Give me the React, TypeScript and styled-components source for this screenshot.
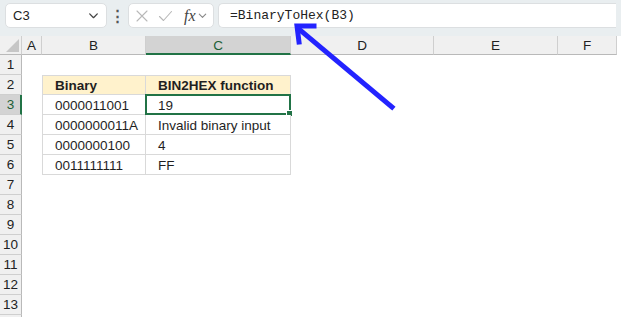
import React from "react";
import styled, { createGlobalStyle } from "styled-components";

const GlobalStyle = createGlobalStyle`
  html, body {
    margin: 0;
    padding: 0;
    background: #ffffff;
    overflow: hidden;
  }
  body {
    font-family: "Liberation Sans", Arial, sans-serif;
    color: #222;
  }
`;

const GREEN = "#217346";

const COLUMNS = [
    { name: "A", width: 20 },
    { name: "B", width: 104 },
    { name: "C", width: 145 },
    { name: "D", width: 143 },
    { name: "E", width: 124 },
    { name: "F", width: 59 },
];

// table in B2:C6
const TABLE: Record<number, [string, string]> = {
    2: ["Binary", "BIN2HEX function"],
    3: ["0000011001", "19"],
    4: ["0000000011A", "Invalid binary input"],
    5: ["0000000100", "4"],
    6: ["0011111111", "FF"],
};

const SELECTED_COL = "C";
const SELECTED_ROW = 3;
const ROW_COUNT = 13;

const ChevronDown = ({ size = 12, color = "#444" }: { size?: number; color?: string }) => (
    <svg width={size} height={size} viewBox="0 0 12 12" fill="none">
        <path d="M2.5 4.5 L6 8 L9.5 4.5" stroke={color} strokeWidth="1.2" strokeLinecap="round" strokeLinejoin="round" />
    </svg>
);

const CancelIcon = () => (
    <svg width="14" height="14" viewBox="0 0 14 14" fill="none">
        <path d="M2 2 L12 12 M12 2 L2 12" stroke="#b8b8b8" strokeWidth="1.1" strokeLinecap="round" />
    </svg>
);

const CheckIcon = () => (
    <svg width="15" height="14" viewBox="0 0 15 14" fill="none">
        <path d="M1.5 7.5 L5.5 11.5 L13.5 2.5" stroke="#b8b8b8" strokeWidth="1.1" strokeLinecap="round" strokeLinejoin="round" />
    </svg>
);

const CornerTriangle = () => (
    <svg width="13" height="13" viewBox="0 0 13 13">
        <polygon points="13,0 13,13 0,13" fill="#c6c6c6" />
    </svg>
);

const Arrow = () => (
    <ArrowLayer width="621" height="317" viewBox="0 0 621 317">
        <g stroke="#2323ff" strokeWidth="5" fill="none" strokeLinecap="square">
            <line x1="392" y1="107" x2="300" y2="30" />
            <polyline points="314,26 297,26 299,42" strokeLinejoin="miter" />
        </g>
    </ArrowLayer>
);

export default function App() {
    const rows = Array.from({ length: ROW_COUNT }, (_, i) => i + 1);

    return (
        <Page>
            <GlobalStyle />
            <Toolbar>
                <NameBox>
                    <span>C3</span>
                    <ChevronDown size={13} />
                </NameBox>
                <Dots>⋮</Dots>
                <FxBox>
                    <CancelIcon />
                    <CheckIcon />
                    <FxLabel>
                        fx
                        <ChevronDown size={11} color="#888" />
                    </FxLabel>
                </FxBox>
                <FormulaBox>=BinaryToHex(B3)</FormulaBox>
            </Toolbar>

            <Sheet>
                <Corner>
                    <CornerTriangle />
                </Corner>
                {COLUMNS.map((c) => (
                    <ColHeader key={c.name} selected={c.name === SELECTED_COL}>
                        {c.name}
                    </ColHeader>
                ))}
                <Filler />

                {rows.map((r) => {
                    const data = TABLE[r];
                    return (
                        <React.Fragment key={r}>
                            <RowHeader selected={r === SELECTED_ROW}>{r}</RowHeader>
                            <Cell />
                            {data ? (
                                <>
                                    <TableCell head={r === 2} first top={r === 2}>
                                        {data[0]}
                                    </TableCell>
                                    <TableCell head={r === 2} top={r === 2}>
                                        {data[1]}
                                        {r === SELECTED_ROW && <Selection />}
                                    </TableCell>
                                </>
                            ) : (
                                <>
                                    <Cell />
                                    <Cell />
                                </>
                            )}
                            <Cell />
                            <Cell />
                            <Cell />
                            <Filler />
                        </React.Fragment>
                    );
                })}
                {/* the next row just peeks in at the bottom edge */}
                <RowHeader />
            </Sheet>
            <Arrow />
        </Page>
    );
}

const Page = styled.div`
    position: relative;
    width: 621px;
    height: 317px;
    overflow: hidden;
    background: #ffffff;
`;

const Toolbar = styled.div`
    height: 36px;
    box-sizing: border-box;
    padding: 3px 5px 0 5px;
    display: flex;
    align-items: flex-start;
    background: #e9eef0;
`;

const BoxBase = styled.div`
    height: 25px;
    box-sizing: border-box;
    background: #ffffff;
    border: 1px solid #dcdfe1;
    border-radius: 5px;
    display: flex;
    align-items: center;
`;

const NameBox = styled(BoxBase)`
    width: 102px;
    padding: 0 6px 0 7px;
    justify-content: space-between;
    font-size: 13px;
    color: #222;
`;

const Dots = styled.div`
    width: 21px;
    height: 25px;
    display: flex;
    align-items: center;
    justify-content: center;
    font-size: 15px;
    font-weight: bold;
    color: #555;
`;

const FxBox = styled(BoxBase)`
    width: 86px;
    padding: 0 4px 0 6px;
    gap: 9px;
    margin-right: 4px;
`;

const FxLabel = styled.div`
    display: flex;
    align-items: center;
    gap: 1px;
    font-family: "Liberation Serif", "Times New Roman", serif;
    font-style: italic;
    font-size: 16px;
    color: #444;
    margin-left: 2px;
`;

const FormulaBox = styled(BoxBase)`
    flex: 1;
    padding-left: 11px;
    font-family: "Liberation Mono", "Courier New", monospace;
    font-size: 13px;
    color: #222;
    border-radius: 5px 0 0 5px;
    border-right: none;
`;

const Sheet = styled.div`
    display: grid;
    grid-template-columns: 22px ${COLUMNS.map((c) => `${c.width}px`).join(" ")} 1fr;
    grid-template-rows: 19px;
    grid-auto-rows: 20px;
    font-size: 13px;
`;

const HeaderBase = styled.div<{ selected?: boolean }>`
    box-sizing: border-box;
    display: flex;
    align-items: center;
    justify-content: center;
    background: ${(p) => (p.selected ? "#d3d3d3" : "#f0f0f0")};
    color: ${(p) => (p.selected ? "#1d5f37" : "#222")};
    font-size: 13.5px;
`;

const Corner = styled(HeaderBase)`
    align-items: flex-end;
    justify-content: flex-end;
    padding: 0 2px 2px 0;
    border-right: 1px solid #cfcfcf;
    border-bottom: 1px solid #b9b9b9;
`;

const ColHeader = styled(HeaderBase)`
    border-right: 1px solid #cfcfcf;
    border-bottom: ${(p) => (p.selected ? `2px solid ${GREEN}` : "1px solid #b9b9b9")};
    padding-top: ${(p) => (p.selected ? "1px" : "0")};
`;

const RowHeader = styled(HeaderBase)`
    border-bottom: 1px solid #cfcfcf;
    border-right: ${(p) => (p.selected ? `2px solid ${GREEN}` : "1px solid #b9b9b9")};
    padding-left: ${(p) => (p.selected ? "1px" : "0")};
`;

const Filler = styled.div`
    background: #ffffff;
`;

const Cell = styled.div`
    background: #ffffff;
`;

const TableCell = styled.div<{ head?: boolean; first?: boolean; top?: boolean }>`
    position: relative;
    box-sizing: border-box;
    display: flex;
    align-items: center;
    padding: 1px 0 0 12px;
    white-space: nowrap;
    font-size: 13.5px;
    background: ${(p) => (p.head ? "#fff2cc" : "#ffffff")};
    font-weight: ${(p) => (p.head ? "bold" : "normal")};
    color: #1f1f1f;
    border-right: 1px solid #d9d9d9;
    border-bottom: 1px solid #d9d9d9;
    border-left: ${(p) => (p.first ? "1px solid #d9d9d9" : "none")};
    border-top: ${(p) => (p.top ? "1px solid #d9d9d9" : "none")};
`;

const Selection = styled.div`
    position: absolute;
    left: -1px;
    top: -1px;
    right: -1px;
    bottom: -1px;
    border: 2px solid ${GREEN};
    pointer-events: none;

    &::after {
        content: "";
        position: absolute;
        right: -4px;
        bottom: -4px;
        width: 5px;
        height: 5px;
        background: ${GREEN};
        border: 1px solid #ffffff;
    }
`;

const ArrowLayer = styled.svg`
    position: absolute;
    left: 0;
    top: 0;
    pointer-events: none;
`;
